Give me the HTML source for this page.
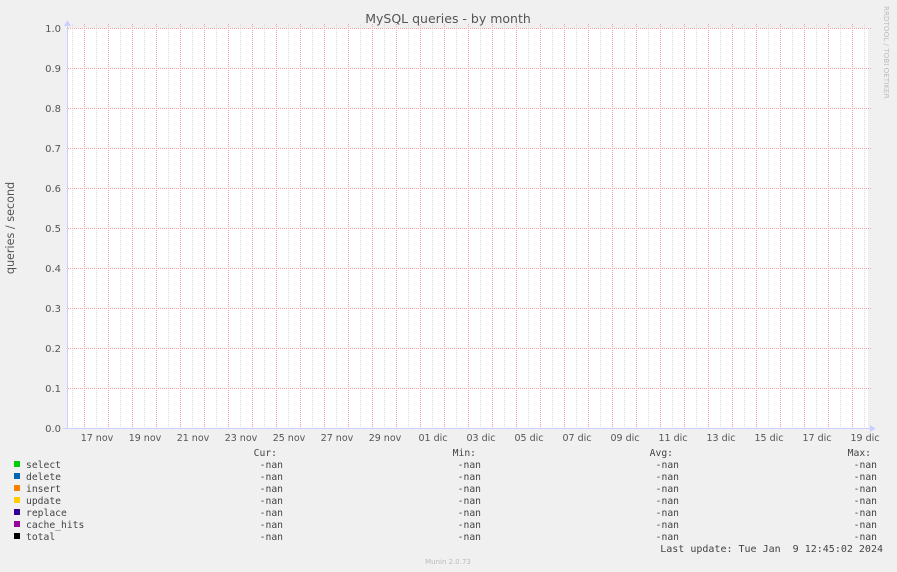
<!DOCTYPE html>
<html><head><style>html,body{margin:0;padding:0;background:#f0f0f0}svg{display:block}</style></head><body>
<svg width="897" height="572" xmlns="http://www.w3.org/2000/svg">
<defs>
<pattern id="v" x="72" y="0" width="24" height="4" patternUnits="userSpaceOnUse">
<rect x="0" y="0" width="1" height="1" fill="#dcdcdc"/><rect x="0" y="2" width="1" height="1" fill="#dcdcdc"/>
<rect x="12" y="0" width="1" height="1" fill="#f5a0a0"/><rect x="12" y="2" width="1" height="1" fill="#f5a0a0"/>
</pattern>
<pattern id="h" x="0" y="28" width="4" height="40" patternUnits="userSpaceOnUse">
<rect x="0" y="0" width="1" height="1" fill="#f5a0a0"/><rect x="2" y="0" width="1" height="1" fill="#f5a0a0"/>
</pattern>
</defs>
<rect width="897" height="572" fill="#f0f0f0"/>
<rect x="67" y="28" width="801" height="400" fill="#fff"/>
<rect x="68" y="24" width="800" height="404" fill="url(#v)"/>
<rect x="67" y="28" width="804" height="401" fill="url(#h)"/>
<line x1="67.5" y1="24" x2="67.5" y2="429" stroke="#ccd0ff"/>
<line x1="63" y1="428.5" x2="872" y2="428.5" stroke="#ccd0ff"/>
<path d="M64 26 L67.5 20 L71 26Z" fill="#ccd0ff"/>
<path d="M870 425 L876 428.5 L870 432Z" fill="#ccd0ff"/>
<g font-family="DejaVu Sans, Liberation Sans, sans-serif" fill="#555">
<text x="448" y="23" font-size="12.5" text-anchor="middle">MySQL queries - by month</text>
<g font-size="10" text-anchor="end">
<text x="61" y="32">1.0</text><text x="61" y="72">0.9</text><text x="61" y="112">0.8</text><text x="61" y="152">0.7</text><text x="61" y="192">0.6</text><text x="61" y="232">0.5</text><text x="61" y="272">0.4</text><text x="61" y="312">0.3</text><text x="61" y="352">0.2</text><text x="61" y="392">0.1</text><text x="61" y="432">0.0</text>
</g>
<g font-size="9.5" text-anchor="middle">
<text x="97" y="441">17 nov</text><text x="145" y="441">19 nov</text><text x="193" y="441">21 nov</text><text x="241" y="441">23 nov</text><text x="289" y="441">25 nov</text><text x="337" y="441">27 nov</text><text x="385" y="441">29 nov</text><text x="433" y="441">01 dic</text><text x="481" y="441">03 dic</text><text x="529" y="441">05 dic</text><text x="577" y="441">07 dic</text><text x="625" y="441">09 dic</text><text x="673" y="441">11 dic</text><text x="721" y="441">13 dic</text><text x="769" y="441">15 dic</text><text x="817" y="441">17 dic</text><text x="865" y="441">19 dic</text>
</g>
<text transform="translate(14,228) rotate(-90)" font-size="11.2" text-anchor="middle">queries / second</text>
<text transform="translate(884,6) rotate(90)" font-size="7.2" fill="#bbb">RRDTOOL / TOBI OETIKER</text>
<text x="448" y="564" font-size="7" fill="#bbb" text-anchor="middle">Munin 2.0.73</text>
</g>
<g font-family="DejaVu Sans Mono, Liberation Mono, monospace" font-size="9.7" fill="#444">
<rect x="14" y="461" width="6" height="6" fill="#00cc00"/><text x="26" y="468">select</text>
<rect x="14" y="473" width="6" height="6" fill="#0066b3"/><text x="26" y="480">delete</text>
<rect x="14" y="485" width="6" height="6" fill="#ff8000"/><text x="26" y="492">insert</text>
<rect x="14" y="497" width="6" height="6" fill="#ffcc00"/><text x="26" y="504">update</text>
<rect x="14" y="509" width="6" height="6" fill="#330099"/><text x="26" y="516">replace</text>
<rect x="14" y="521" width="6" height="6" fill="#990099"/><text x="26" y="528">cache_hits</text>
<rect x="14" y="533" width="6" height="6" fill="#000000"/><text x="26" y="540">total</text>
<g text-anchor="end">
<text x="277" y="456">Cur:</text><text x="476" y="456">Min:</text><text x="673" y="456">Avg:</text><text x="871" y="456">Max:</text>
<g id="c">
<text x="283" y="468">-nan</text><text x="283" y="480">-nan</text><text x="283" y="492">-nan</text><text x="283" y="504">-nan</text><text x="283" y="516">-nan</text><text x="283" y="528">-nan</text><text x="283" y="540">-nan</text>
</g>
<use href="#c" x="198"/><use href="#c" x="396"/><use href="#c" x="594"/>
<text x="883" y="552" font-size="10">Last update: Tue Jan &#160;9 12:45:02 2024</text>
</g>
</g>
</svg>
</body></html>
